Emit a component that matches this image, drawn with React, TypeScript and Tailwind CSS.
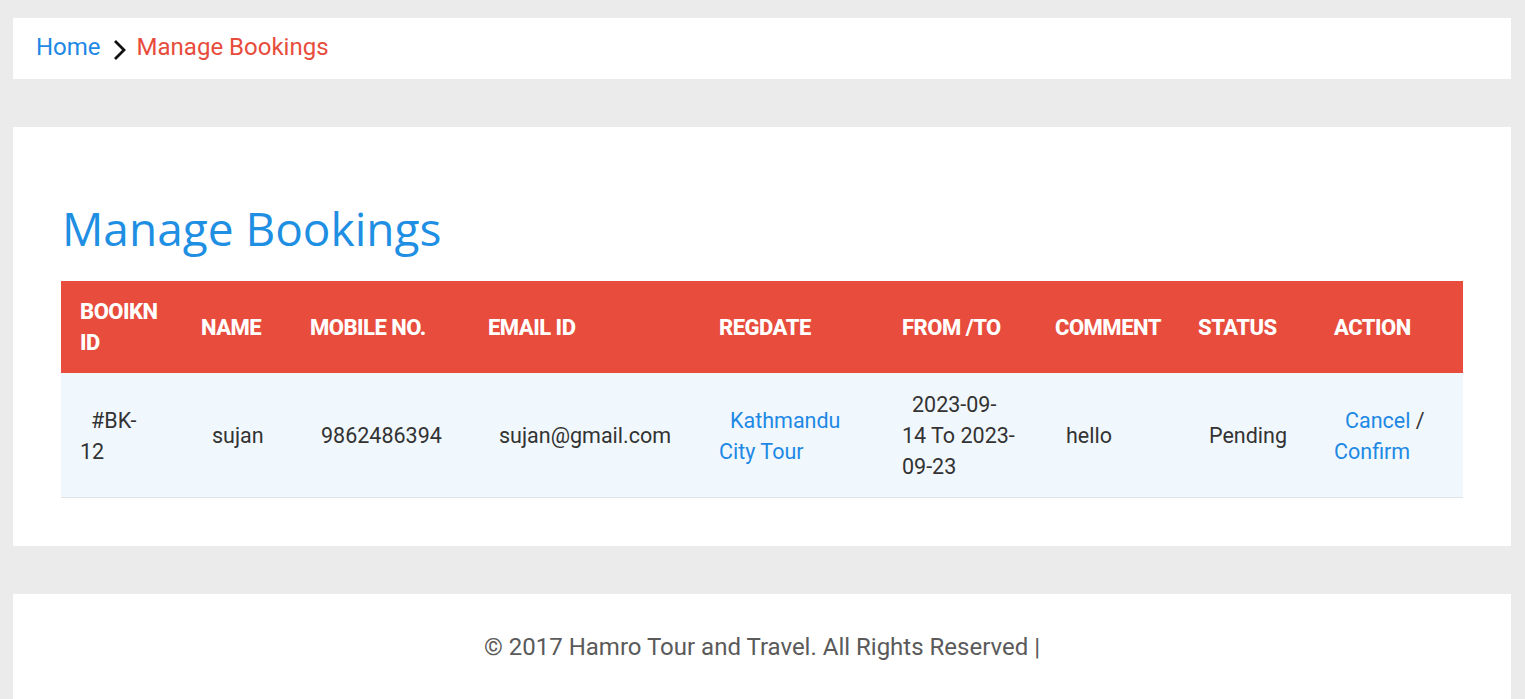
import React from "react";

const headers = [
  { label: "BOOIKN ID", w: "w-[121px]" },
  { label: "NAME", w: "w-[109px]" },
  { label: "MOBILE NO.", w: "w-[178px]" },
  { label: "EMAIL ID", w: "w-[231px]" },
  { label: "REGDATE", w: "w-[183px]" },
  { label: "FROM /TO", w: "w-[153px]" },
  { label: "COMMENT", w: "w-[143px]" },
  { label: "STATUS", w: "w-[136px]" },
  { label: "ACTION", w: "w-[148px]" },
];

const Chevron = () => (
  <svg width="18" height="24" viewBox="0 0 18 24" className="ml-[10px] mr-[8px] mt-[5px]">
    <polyline points="4,3 13,12 4,21" fill="none" stroke="#111" strokeWidth="2.8" />
  </svg>
);

export default function App() {
  return (
    <div
      className="min-h-[699px] bg-[#ebebeb] px-[13px] pt-[18px] pr-[14px]"
      style={{ fontFamily: "Roboto, 'Liberation Sans', sans-serif" }}
    >
      {/* breadcrumb */}
      <div className="flex h-[61px] items-center bg-white pb-[3px] pl-[23px] text-[24px]">
        <a className="text-[#1e88e5]">Home</a>
        <Chevron />
        <span className="text-[#e74c3c]">Manage Bookings</span>
      </div>

      {/* main */}
      <div className="mt-[48px] bg-white px-[48px] pb-[48px] pt-[70px]">
        <h2
          className="ml-[1px] mb-[22px] text-[46px] leading-[62px] text-[#1e8fe3]"
          style={{ fontFamily: "'Open Sans', sans-serif" }}
        >
          Manage Bookings
        </h2>
        <table className="w-full table-fixed border-collapse text-left">
          <colgroup>
            {headers.map((h) => (
              <col key={h.label} className={h.w} />
            ))}
          </colgroup>
          <thead>
            <tr className="bg-[#e74c3c]">
              {headers.map((h) => (
                <th
                  key={h.label}
                  className="px-[19px] py-[15px] align-middle text-[22px] font-extrabold leading-[31px] tracking-[-0.5px] text-white"
                >
                  {h.label}
                </th>
              ))}
            </tr>
          </thead>
          <tbody>
            <tr className="border-b border-[#e3e3e3] bg-[#f1f8fd] text-[21.5px] leading-[31px] text-[#333]">
              <td className="pl-[19px] pr-[28px] pt-[16px] pb-[15px] indent-[11px]">#BK-12</td>
              <td className="px-[19px] pt-[16px] pb-[15px] indent-[11px]">sujan</td>
              <td className="px-[19px] pt-[16px] pb-[15px] indent-[11px]">9862486394</td>
              <td className="px-[19px] pt-[16px] pb-[15px] indent-[11px]">sujan@gmail.com</td>
              <td className="px-[19px] pt-[16px] pb-[15px] indent-[11px]">
                <a className="text-[#1e88e5]">Kathmandu City Tour</a>
              </td>
              <td className="px-[19px] pt-[16px] pb-[15px] indent-[10px]">2023-09-14 To 2023-09-23</td>
              <td className="px-[19px] pt-[16px] pb-[15px] indent-[11px]">hello</td>
              <td className="px-[19px] pt-[16px] pb-[15px] indent-[11px]">Pending</td>
              <td className="px-[19px] pt-[16px] pb-[15px] indent-[11px]">
                <a className="text-[#1e88e5]">Cancel</a> / <a className="text-[#1e88e5]">Confirm</a>
              </td>
            </tr>
          </tbody>
        </table>
      </div>

      {/* footer */}
      <div className="mt-[48px] flex h-[105px] items-center justify-center bg-white text-[24px] text-[#5a5a5a]">
        © 2017 Hamro Tour and Travel. All Rights Reserved |
      </div>
    </div>
  );
}
